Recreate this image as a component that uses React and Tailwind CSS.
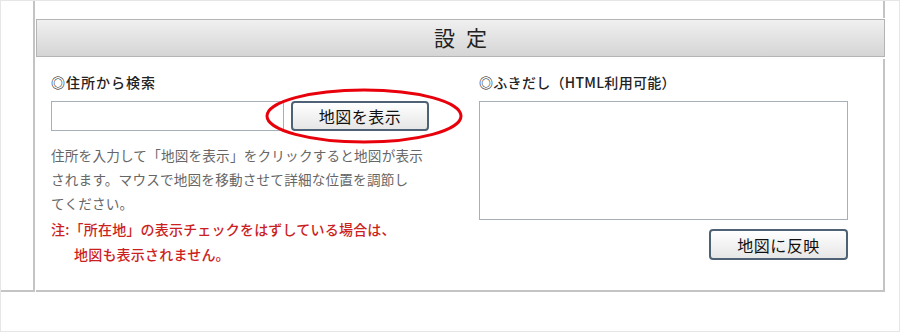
export default function App() {
  const jp = { fontFamily: '"Noto Sans CJK JP", "Noto Sans", sans-serif' };
  return (
    <div className="relative w-[900px] h-[332px] bg-white border border-[#e6e6e6] overflow-hidden" style={jp}>
      <div className="flex h-[291px]">
        <div className="w-[34px] shrink-0 border-r-2 border-b-2 border-[#c4c4c4]" />
        <div className="ml-[1px] w-[849px] flex flex-col">
          <div className="h-[17px] border-r-2 border-[#c4c4c4]" />
          <div className="mt-[1px] h-[38px] flex items-center justify-center border border-[#b4b4b4] bg-gradient-to-b from-[#f0f0f0] to-[#d5d5d5]">
            <span className="text-[21px] text-[#222] tracking-[11px] pl-[11px]">設定</span>
          </div>
          <div className="mt-[2px] flex-1 border-r-2 border-b-2 border-[#c4c4c4] flex">
            <div className="pl-[15px] pt-[13px] w-[443px]">
              <div className="text-[14px] text-[#222] font-medium leading-[20px] tracking-[1px]">◎住所から検索</div>
              <div className="mt-[9px] flex items-center">
                <div className="w-[233px] h-[30px] border border-[#a7afb9] bg-white" />
                <div className="ml-[7px] w-[138px] h-[30px] rounded-[4px] border-2 border-[#4f6275] bg-gradient-to-b from-white to-[#e6e6e6] flex items-center justify-center text-[16px] text-[#111] tracking-[0.5px]">地図を表示</div>
              </div>
              <div className="mt-[12px] text-[13.6px] text-[#666] leading-[24px] tracking-[0.2px]">
                <div>住所を入力して「地図を表示」をクリックすると地図が表示</div>
                <div>されます。マウスで地図を移動させて詳細な位置を調節し</div>
                <div>てください。</div>
              </div>
              <div className="text-[14px] text-[#cc1f1f] font-medium leading-[25px] mt-[2px] tracking-[0.2px]">
                <div>注:「所在地」の表示チェックをはずしている場合は、</div>
                <div className="pl-[23px]">地図も表示されません。</div>
              </div>
            </div>
            <div className="pt-[13px] w-[369px] flex flex-col">
              <div className="text-[14px] text-[#222] font-medium leading-[20px] tracking-[0.3px]">◎ふきだし（HTML利用可能）</div>
              <div className="mt-[9px] h-[119px] border border-[#a7afb9] bg-white" />
              <div className="mt-[9px] flex justify-end">
                <div className="w-[139px] h-[31px] rounded-[4px] border-2 border-[#4f6275] bg-gradient-to-b from-white to-[#e6e6e6] flex items-center justify-center text-[16px] text-[#111] tracking-[0.5px]">地図に反映</div>
              </div>
            </div>
          </div>
        </div>
      </div>
      <svg className="absolute left-[263px] top-[86px]" width="200" height="58" viewBox="0 0 200 58">
        <ellipse cx="100" cy="29" rx="97" ry="26" fill="none" stroke="#e8000b" strokeWidth="3" />
      </svg>
    </div>
  );
}
